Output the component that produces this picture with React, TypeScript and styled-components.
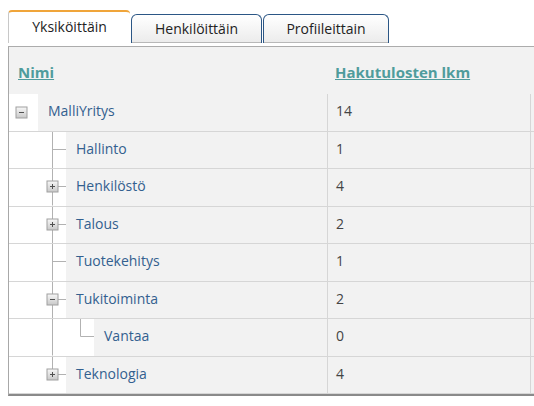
import React from 'react';
import styled, { createGlobalStyle } from 'styled-components';

const Global = createGlobalStyle`
  html, body { margin: 0; padding: 0; background: #fff; overflow: hidden; }
  body { font-family: "Open Sans", "Noto Sans", sans-serif; }
`;

const Page = styled.div`
  box-sizing: border-box;
  padding: 10px 0 0 8px;
  width: 534px;
  overflow: hidden;
`;

const TabStrip = styled.div`
  display: flex;
  align-items: flex-end;
  height: 33px;
`;

const ActiveTab = styled.div`
  box-sizing: border-box;
  width: 122px;
  height: 33px;
  background: #fff;
  border-top: 2px solid #f0a53a;
  border-left: 1px solid #c8c8c8;
  border-radius: 4px 4px 0 0;
  display: flex;
  align-items: center;
  justify-content: center;
  font-size: 14px;
  color: #222;
  padding-bottom: 2px;
`;

const Tab = styled.div<{ $w: number; $gap: number }>`
  box-sizing: border-box;
  width: ${(p) => p.$w}px;
  margin-left: ${(p) => p.$gap}px;
  height: 29px;
  border: 1.5px solid #2b5685;
  border-bottom: none;
  border-radius: 6px 6px 0 0;
  background: linear-gradient(#ffffff, #ebebeb);
  box-shadow: inset 0 -1px 0 #b8b8b8;
  display: flex;
  align-items: center;
  justify-content: center;
  font-size: 14px;
  color: #222;
  padding-bottom: 1px;
`;

const Panel = styled.div`
  margin-top: 3px;
  border-top: 1px solid #acacac;
  border-left: 1px solid #a8a8a8;
  border-bottom: 2px solid #8a8a8a;
  background: #f2f2f2;
`;

const Grid = styled.div`
  display: grid;
  grid-template-columns: 318px 203px 1fr;
`;

const HeaderRow = styled(Grid)`
  height: 47px;
`;

const HeaderCell = styled.div<{ $pad: number }>`
  display: flex;
  align-items: center;
  padding-left: ${(p) => p.$pad}px;
  padding-top: 3px;
  font-size: 15px;
  font-weight: 700;
`;

const HeaderLink = styled.a`
  color: #4f9c9c;
  text-decoration: underline;
  cursor: pointer;
`;

const Row = styled(Grid)`
  box-sizing: border-box;
  height: 37.5px;
  border-bottom: 1px solid #d6d6d6;
`;

const TreeCell = styled.div`
  display: flex;
  align-items: stretch;
`;

const Indent = styled.div<{ $w: number }>`
  width: ${(p) => p.$w}px;
  flex: none;
  background: #fff;
  display: flex;
  align-items: stretch;
`;

const NodeText = styled.div`
  display: flex;
  align-items: center;
  padding-left: 10px;
  padding-bottom: 3px;
  font-size: 14px;
  color: #33608f;
`;

const CountCell = styled.div`
  display: flex;
  align-items: center;
  padding-left: 8px;
  padding-bottom: 3px;
  border-left: 1px solid #d6d6d6;
  font-size: 14px;
  color: #444;
`;

const EndCell = styled.div`
  border-left: 1px solid #d6d6d6;
`;

type Kind = 'blank' | 'line' | 'tee' | 'corner' | 'root';
type Exp = 'plus' | 'minus' | undefined;

const Expander: React.FC<{ x: number; y: number; type: 'plus' | 'minus' }> = ({ x, y, type }) => (
  <g>
    <defs>
      <linearGradient id={`eg-${type}`} x1="0" y1="0" x2="0" y2="1">
        <stop offset="0" stopColor="#f8f8f8" />
        <stop offset="1" stopColor="#c8c8c8" />
      </linearGradient>
    </defs>
    <rect x={x - 5} y={y - 5} width={11} height={11} fill={`url(#eg-${type})`} stroke="#a0a0a0" strokeWidth={1} />
    <line x1={x - 2} y1={y + 0.5} x2={x + 3} y2={y + 0.5} stroke="#505050" strokeWidth={1} />
    {type === 'plus' && <line x1={x + 0.5} y1={y - 2} x2={x + 0.5} y2={y + 3} stroke="#505050" strokeWidth={1} />}
  </g>
);

const TreeGlyph: React.FC<{ kind: Kind; exp?: Exp; w: number }> = ({ kind, exp, w }) => {
  const h = 36.5;
  const cx = 14.5;
  const cy = 17.5;
  const stroke = '#b2b2b2';
  return (
    <svg width={w} height={h} viewBox={`0 0 ${w} ${h}`}>
      {(kind === 'line' || kind === 'tee') && (
        <line x1={cx} y1={0} x2={cx} y2={h} stroke={stroke} strokeWidth={1} />
      )}
      {kind === 'corner' && <line x1={cx} y1={0} x2={cx} y2={cy} stroke={stroke} strokeWidth={1} />}
      {(kind === 'tee' || kind === 'corner') && (
        <line x1={cx} y1={cy} x2={w} y2={cy} stroke={stroke} strokeWidth={1} />
      )}
      {kind === 'root' && exp && <Expander x={12} y={cy + 0.5} type={exp} />}
      {kind !== 'root' && exp && <Expander x={cx - 0.5} y={cy - 0.5} type={exp} />}
    </svg>
  );
};

type Node = { name: string; count: number; cells: { kind: Kind; exp?: Exp }[] };

const nodes: Node[] = [
  { name: 'MalliYritys', count: 14, cells: [{ kind: 'root', exp: 'minus' }] },
  { name: 'Hallinto', count: 1, cells: [{ kind: 'blank' }, { kind: 'tee' }] },
  { name: 'Henkilöstö', count: 4, cells: [{ kind: 'blank' }, { kind: 'tee', exp: 'plus' }] },
  { name: 'Talous', count: 2, cells: [{ kind: 'blank' }, { kind: 'tee', exp: 'plus' }] },
  { name: 'Tuotekehitys', count: 1, cells: [{ kind: 'blank' }, { kind: 'tee' }] },
  { name: 'Tukitoiminta', count: 2, cells: [{ kind: 'blank' }, { kind: 'tee', exp: 'minus' }] },
  { name: 'Vantaa', count: 0, cells: [{ kind: 'blank' }, { kind: 'line' }, { kind: 'corner' }] },
  { name: 'Teknologia', count: 4, cells: [{ kind: 'blank' }, { kind: 'corner', exp: 'plus' }] },
];

export default function App() {
  return (
    <>
      <Global />
      <Page>
        <TabStrip>
          <ActiveTab>Yksiköittäin</ActiveTab>
          <Tab $w={131} $gap={1}>Henkilöittäin</Tab>
          <Tab $w={126} $gap={1}>Profiileittain</Tab>
        </TabStrip>
        <Panel>
          <HeaderRow>
            <HeaderCell $pad={9}>
              <HeaderLink>Nimi</HeaderLink>
            </HeaderCell>
            <HeaderCell $pad={8}>
              <HeaderLink>Hakutulosten lkm</HeaderLink>
            </HeaderCell>
            <div />
          </HeaderRow>
          {nodes.map((n) => (
            <Row key={n.name}>
              <TreeCell>
                {n.cells.map((c, i) => {
                  const w = i === 0 ? 29 : 28;
                  return (
                    <Indent key={i} $w={w}>
                      <TreeGlyph kind={c.kind} exp={c.exp} w={w} />
                    </Indent>
                  );
                })}
                <NodeText>{n.name}</NodeText>
              </TreeCell>
              <CountCell>{n.count}</CountCell>
              <EndCell />
            </Row>
          ))}
        </Panel>
      </Page>
    </>
  );
}
